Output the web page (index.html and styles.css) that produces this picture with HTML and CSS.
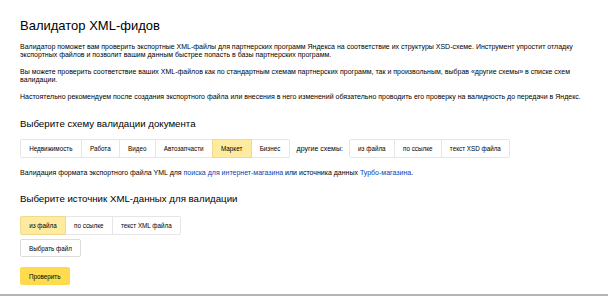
FILE: index.html
```html
<!DOCTYPE html>
<html>

<head>
	<meta charset="UTF-8">
	<meta name="viewport" content="width=device-width, initial-scale=1.0">
	<title>Валидатор XML-фидов</title>
	<link rel="stylesheet" href="styles.css">
</head>

<body>
	<div class="page">
		<h1>Валидатор XML-фидов</h1>
		<p>Валидатор поможет вам проверить экспортные XML-файлы для партнерских программ Яндекса на соответствие их структуры XSD-схеме. Инструмент упростит отладку экспортных файлов и позволит вашим данным быстрее попасть в базы партнерских программ.</p>
		<p>Вы можете проверить соответствие ваших XML-файлов как по стандартным схемам партнерских программ, так и произвольным, выбрав «другие схемы» в списке схем валидации.</p>
		<p>Настоятельно рекомендуем после создания экспортного файла или внесения в него изменений обязательно проводить его проверку на валидность до передачи в Яндекс.</p>

		<h2>Выберите схему валидации документа</h2>
		<div class="schema-row">
			<div class="radio-group">
				<button class="radio">Недвижимость</button>
				<button class="radio">Работа</button>
				<button class="radio">Видео</button>
				<button class="radio">Автозапчасти</button>
				<button class="radio checked">Маркет</button>
				<button class="radio">Бизнес</button>
			</div>
			<span class="other-label">другие схемы:</span>
			<div class="radio-group">
				<button class="radio">из файла</button>
				<button class="radio">по ссылке</button>
				<button class="radio">текст XSD файла</button>
			</div>
		</div>
		<p class="hint">Валидация формата экспортного файла YML для <a href="#">поиска для интернет-магазина</a> или источника данных <a href="#">Турбо-магазина</a>.</p>

		<h2 class="source-title">Выберите источник XML-данных для валидации</h2>
		<div class="radio-group">
			<button class="radio checked">из файла</button>
			<button class="radio">по ссылке</button>
			<button class="radio">текст XML файла</button>
		</div>
		<div class="group">
			<button class="btn">Выбрать файл</button>
		</div>
		<div class="group pt-10">
			<button class="btn btn-action">Проверить</button>
		</div>
	</div>
</body>

</html>
```

FILE: styles.css
```css
* {
	margin: 0px;
	padding: 0px;
	box-sizing: border-box;
}

html,
body {
	height: 100%;
}

body {
	font-family: "Liberation Sans", Arial, sans-serif;
	font-size: 7px;
	line-height: 8px;
	color: #000;
	background-color: #fff;
}

.page {
	min-height: 100%;
	padding: 18px 20px 0 20px;
	border-bottom: 2px solid #b5b5b5;
}

h1 {
	font-size: 13px;
	font-weight: normal;
	line-height: 16px;
	margin-bottom: 9px;
}

p {
	max-width: 568px;
	margin-bottom: 9px;
}

h2 {
	font-size: 9.7px;
	font-weight: normal;
	line-height: 12px;
	margin-top: 17px;
	margin-bottom: 9px;
}

h2.source-title {
	margin-top: 16px;
	margin-bottom: 11px;
}

a {
	color: #04b;
	text-decoration: none;
}

.schema-row {
	display: flex;
	align-items: center;
	margin-bottom: 11px;
}

.other-label {
	margin: 0 6px 0 7px;
}

.radio-group {
	display: flex;
}

button {
	font-family: inherit;
	font-size: 6.3px;
	color: #000;
	cursor: pointer;
}

.radio {
	height: 19px;
	padding: 0 8.2px;
	background-color: #fff;
	border: 1px solid #e6e6e6;
	margin-left: -1px;
}

.radio:first-child {
	margin-left: 0;
	border-radius: 2px 0 0 2px;
}

.radio:last-child {
	border-radius: 0 2px 2px 0;
}

.radio.checked {
	background-color: #ffeba0;
	border-color: #f0d98a;
	position: relative;
}

.hint {
	margin-bottom: 0;
}

.group {
	padding-top: 4px;
}

.pt-10 {
	padding-top: 10px;
}

.btn {
	height: 18px;
	padding: 0 8px;
	background-color: #fff;
	border: 1px solid #dcdcdc;
	border-radius: 2px;
}

.btn-action {
	background-color: #ffdb4d;
	border-color: #ffdb4d;
}
```
